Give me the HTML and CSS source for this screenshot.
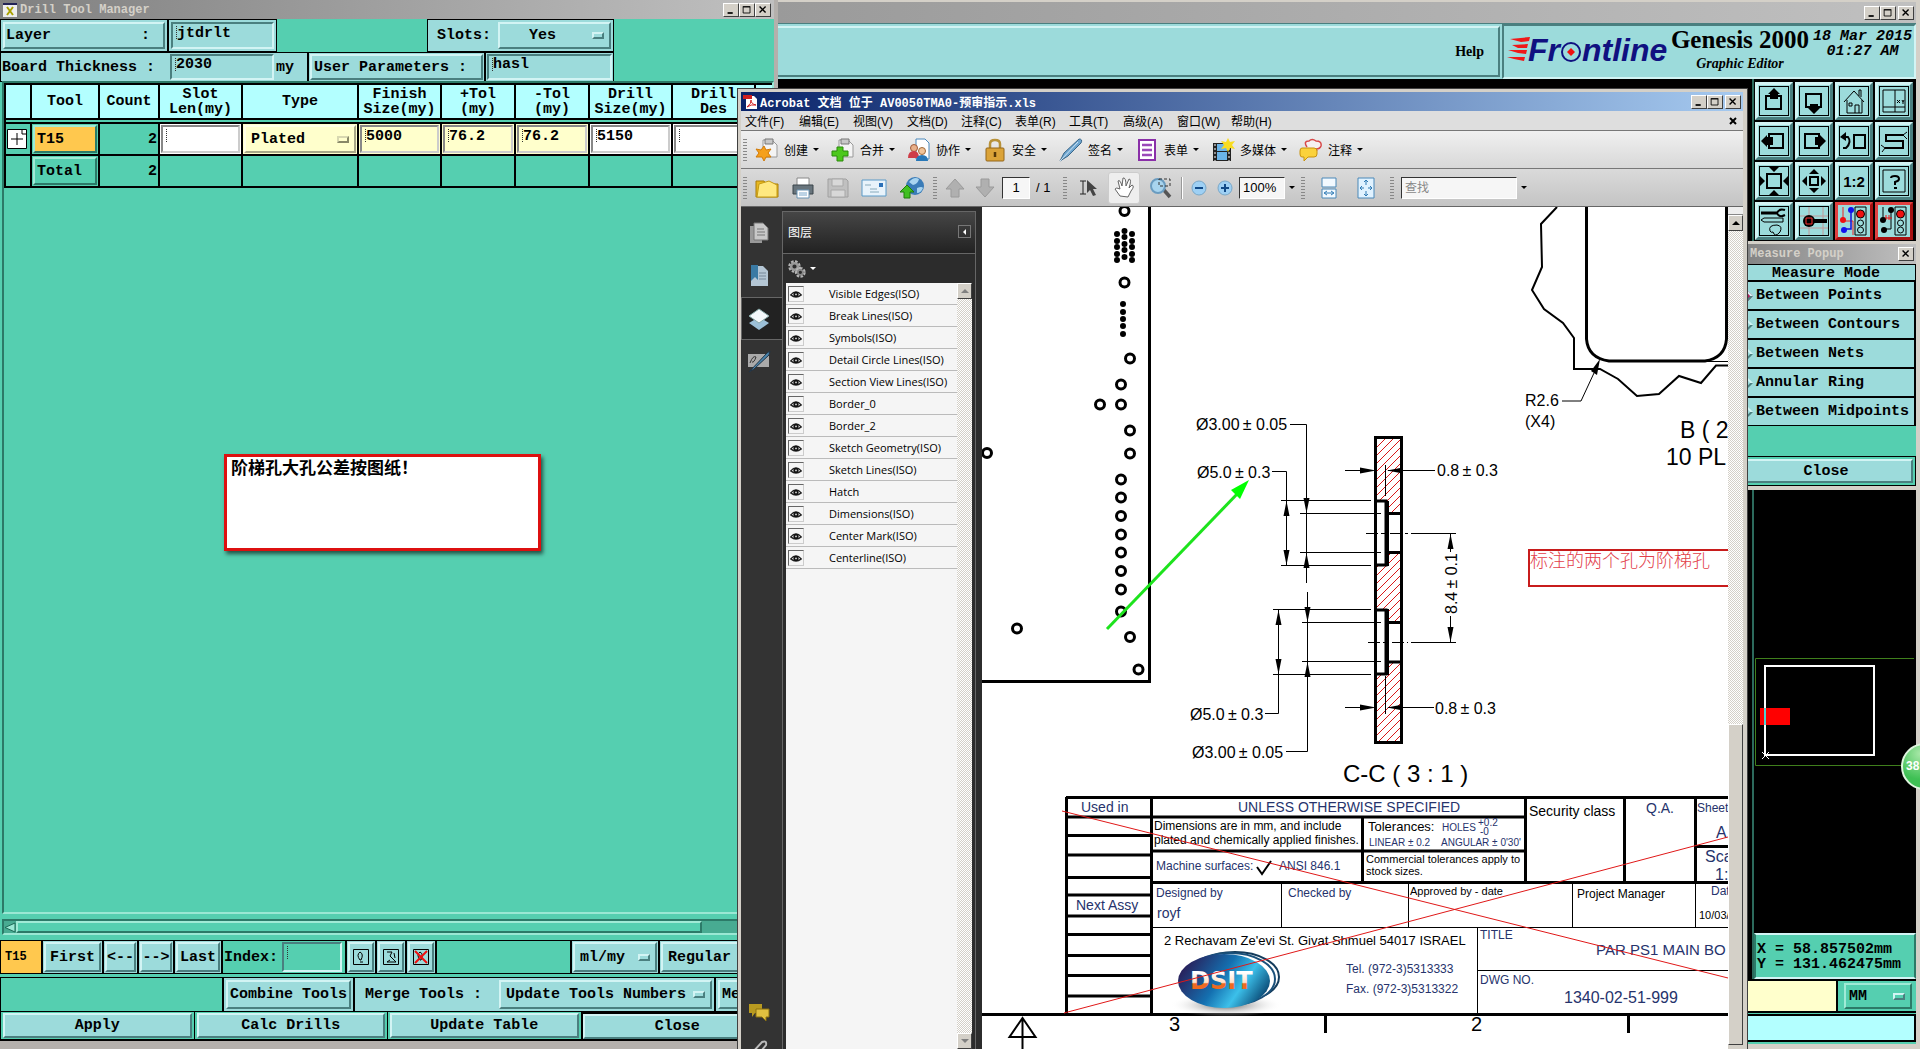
FILE: index.html
```html
<!DOCTYPE html>
<html lang="zh-CN">
<head>
<meta charset="utf-8">
<title>Genesis 2000 - Drill Tool Manager</title>
<link rel="stylesheet" href="styles.css">
</head>
<body>
<svg class="defs" aria-hidden="true">
  <defs>
    <symbol id="min" viewBox="0 0 16 14"><path d="M4 10.5h6" stroke="#000" stroke-width="2"/></symbol>
    <symbol id="max" viewBox="0 0 16 14"><path d="M3.500 3.500h8v7h-8zM3 3h9" fill="none" stroke="#000"/></symbol>
    <symbol id="close" viewBox="0 0 16 14"><path d="M4 3l7 7M11 3l-7 7" stroke="#000" stroke-width="1.600"/></symbol>
    <symbol id="eye" viewBox="0 0 16 16"><path d="M2 9Q8 2 14 9Q8 14 2 9z" fill="#fff" stroke="#222" stroke-width="1.500"/><circle cx="8" cy="8.500" r="3" fill="#111"/><circle cx="8" cy="8.500" r="1" fill="#ddd"/></symbol>
    <symbol id="page" viewBox="0 0 24 24"><path d="M8 2h9l5 5v12H8z" fill="#f4f4f4" stroke="#999"/><path d="M10 1h8v5h-8z" fill="#c8c8c8" stroke="#777"/></symbol>
    <linearGradient id="ball" x1="0" y1="0.300" x2="1" y2="0.700"><stop offset="0" stop-color="#2a1a55"/><stop offset="0.450" stop-color="#1470b0"/><stop offset="0.700" stop-color="#3cc0ea"/><stop offset="1" stop-color="#06406c"/></linearGradient>
    <linearGradient id="brand" x1="0" y1="0" x2="0" y2="1"><stop offset="0.200" stop-color="#fff"/><stop offset="0.550" stop-color="#ffe0c8"/><stop offset="0.600" stop-color="#f06a20"/></linearGradient>
    <radialGradient id="shade"><stop offset="0" stop-color="#555"/><stop offset="1" stop-color="#fff" stop-opacity="0"/></radialGradient>
    <pattern id="hatch" width="8" height="8" patternUnits="userSpaceOnUse"><path d="M-2 10L10 -2M-2 2L2 -2M6 10L10 6" stroke="#d81818" stroke-width="1"/></pattern>
  </defs>
</svg>

<main class="desktop">

  <section class="editor" aria-label="Genesis 2000 Graphic Editor">
    <div class="bar bar-editor"><span class="wbtns"><button aria-label="Minimize"><svg><use href="#min"/></svg></button><button aria-label="Maximize"><svg><use href="#max"/></svg></button><button class="apart" aria-label="Close"><svg><use href="#close"/></svg></button></span></div>
    <header class="editor-head">
      <nav class="editor-menu"><button>Help</button></nav>
      <div class="brand">
        <svg class="logo" viewBox="0 0 162 28" role="img" aria-label="Frontline">
          <path d="M3 3l20-2-1 4-8 1zM5 9l16-1-1 4-9 0zM1 14l19 0-1 4-8-1zM0 21l18 0-1 4-10-2z" fill="#f01818"/>
          <text x="21" y="25">Fr</text><text x="75" y="25">ntline</text>
          <circle cx="64" cy="16" r="9" fill="none" stroke="#101080" stroke-width="2"/><path d="M64 12l4 4-4 4-4-4z" fill="#f01010"/>
        </svg>
        <div class="product"><h1>Genesis 2000</h1><em>Graphic Editor</em></div>
        <time class="clock">18 Mar 2015<br>01:27 AM</time>
      </div>
    </header>
    <div class="editor-body">
      <div class="canvas"></div>
      <aside class="side">
        <div class="tools">
          <button aria-label="Pan up"><svg viewBox="0 0 32 32"><path d="M8 11h15v13H8z" class="k2"/><path d="M10 9l6-6 6 6h-2v5h-8V9z"/></svg></button>
          <button aria-label="Pan down"><svg viewBox="0 0 32 32"><path d="M8 9h15v13H8z" class="k2"/><path d="M10 23l6 6 6-6h-2v-4h-8v4z"/></svg></button>
          <button aria-label="Home"><svg viewBox="0 0 32 32"><path d="M9 15v13h15V15M6 17L16 6l10 11M21 11V5h2v7M17 28v-8h4v8M11 18h3v3h-3z" class="k1"/></svg></button>
          <button aria-label="Coordinates"><svg viewBox="0 0 32 32"><path d="M5 5h22v22H5zM17 5v22M5 22h22" class="k1"/><path d="M19 15l3 3M22 15l-3 3M24 15l1 2 1-2M25 17v2" class="k1"/></svg></button>
          <button aria-label="Pan left"><svg viewBox="0 0 32 32"><path d="M11 9h14v14H11z" class="k2"/><path d="M9 10l-6 6 6 6v-2h6v-8H9z"/></svg></button>
          <button aria-label="Pan right"><svg viewBox="0 0 32 32"><path d="M7 9h14v14H7z" class="k2"/><path d="M22 10l6 6-6 6v-2h-5v-8h5z"/></svg></button>
          <button aria-label="Previous view"><svg viewBox="0 0 32 32"><path d="M16 10h11v13H16z" class="k2"/><path d="M6 12h4q4 5-2 11H5" class="k2"/><path d="M2 12l6-5v9z"/></svg></button>
          <button aria-label="Serpentine"><svg viewBox="0 0 32 32"><path d="M26 10H8v6h17v7H7" class="k2"/><path d="M25 10l4-3M25 10l4 4M7 23l-4-3M7 23l-3 4" class="k1"/></svg></button>
          <button aria-label="Zoom in"><svg viewBox="0 0 32 32"><path d="M9 9h14v14H9z" class="k2"/><path d="M11 2h10l-5 5zM11 30h10l-5-5zM2 11v10l5-5zM30 11v10l-5-5z"/></svg></button>
          <button aria-label="Zoom out"><svg viewBox="0 0 32 32"><path d="M12 12h8v8h-8z" class="k2"/><path d="M11 9h10l-5-5zM11 23h10l-5 5zM9 11v10l-5-5zM23 11v10l5-5z"/></svg></button>
          <button class="ratio">1:2</button>
          <button aria-label="Query"><svg viewBox="0 0 32 32"><path d="M5 5h22v22H5z" class="k1"/><path d="M13 13q0-2 4-2 4 0 4 3 0 2-4 3v3M16 23h3" class="k2"/></svg></button>
          <button aria-label="Setup"><svg viewBox="0 0 32 32"><path d="M3 8h16" stroke="#000" stroke-width="3"/><path d="M27 5q-6-2-8 3 2 5 8 2" class="k2"/><path d="M3 15l3-2h19v4H6zM12 26q-2-6 7-6 6 1 3 7-5 6-7 0-2 1-3-1z" class="k1"/></svg></button>
          <button aria-label="Pad"><svg viewBox="0 0 32 32"><path d="M11 2v28M25 2v28M2 11h28M2 23h28" stroke="#c09a9a"/><circle cx="11" cy="16" r="6"/><path d="M11 16h18" stroke="#000" stroke-width="4"/><path d="M8 13h6v6H8z" fill="none" stroke="#f33"/></svg></button>
          <button class="alert" aria-label="Net check"><svg viewBox="0 0 32 32"><path d="M5 2v14h10v14" fill="none" stroke="#e22"/><path d="M13 4v20H7" fill="none" stroke="#11d" stroke-width="1.500"/><circle cx="13" cy="5" r="3" fill="#11e"/><circle cx="6" cy="25" r="3" fill="#11e"/><circle cx="5" cy="15" r="3" fill="#e11"/><path d="M17 2h11v28H17z" class="k1"/><circle cx="22.500" cy="9" r="4" fill="#e11" stroke="#000"/><circle cx="22.500" cy="18" r="3" class="k1"/><circle cx="22.500" cy="25" r="3" class="k1"/></svg></button>
          <button class="alert" aria-label="Design check"><svg viewBox="0 0 32 32"><path d="M5 2v12M13 4v20H7" class="k1"/><path d="M6 13h8M8 10v5M11 10v5" stroke="#e11"/><circle cx="13" cy="5" r="3"/><circle cx="6" cy="25" r="3"/><circle cx="5" cy="15" r="3"/><path d="M17 2h11v28H17z" class="k1"/><circle cx="22.500" cy="9" r="4" fill="#e11" stroke="#000"/><circle cx="22.500" cy="18" r="3" class="k1"/><circle cx="22.500" cy="25" r="3" class="k1"/></svg></button>
        </div>
        <div class="overview">
          <svg viewBox="0 0 160 275" role="img" aria-label="Board overview">
            <path d="M160 .5H1.500v107H160" fill="none" stroke="#3f7f1c"/>
            <path d="M6 50h30v17H6z" fill="#f00"/>
            <path d="M11 8h109v89H11z" fill="none" stroke="#fff" stroke-width="2"/><path d="M11 50v17" stroke="#4fd0d0" stroke-width="2"/>
            <path d="M8 94l7 7M15 94l-7 7" stroke="#fff"/>
          </svg>
        </div>
        <pre class="coords">X = 58.857502mm
Y = 131.462475mm</pre>
      </aside>
    </div>
    <div class="command">
      <input class="command-line" aria-label="Command">
      <div class="unit"><label class="pick"><select aria-label="Units"><option>MM</option></select><span class="knob"></span></label></div>
    </div>
    <input class="message" aria-label="Message">
  </section>

  <section class="drill" aria-label="Drill Tool Manager">
    <div class="bar bar-drill"><svg class="appicon" viewBox="0 0 14 14"><path d="M0 0h14v14H0z" fill="#eee"/><path d="M0 1h14" stroke="#225" stroke-width="2"/><path d="M4 4l6 8M10 4l-6 8" stroke="#a8a000" stroke-width="2"/></svg><b>Drill Tool Manager</b><span class="wbtns"><button aria-label="Minimize"><svg><use href="#min"/></svg></button><button aria-label="Maximize"><svg><use href="#max"/></svg></button><button aria-label="Close"><svg><use href="#close"/></svg></button></span></div>
    <form class="drill-form">
      <div class="line line-a">
        <div class="cell"><button type="button" class="bev spread"><span>Layer</span><span>:</span></button></div>
        <div class="cell"><input class="sunk" value="jtdrlt" aria-label="Layer"></div>
        <div></div>
        <div class="cell"><label for="slots">Slots:</label><span class="pick"><select id="slots"><option>Yes</option></select><span class="knob"></span></span></div>
      </div>
      <div class="line line-b">
        <div class="cell"><label for="thick">Board Thickness :</label><input id="thick" class="sunk" value="2030"><span>my</span></div>
        <div class="cell"><button type="button" class="bev left">User Parameters :</button></div>
        <div class="cell"><input class="sunk" value="hasl" aria-label="User Parameters"></div>
      </div>
      <div class="frame">
        <table class="grid">
          <colgroup><col class="c0"><col class="c1"><col class="c2"><col class="c3"><col class="c4"><col class="c3"><col class="c5"><col class="c5"><col class="c3"><col class="c3"><col class="c6"></colgroup>
          <thead><tr><th></th><th>Tool</th><th>Count</th><th>Slot<br>Len(my)</th><th>Type</th><th>Finish<br>Size(my)</th><th>+Tol<br>(my)</th><th>-Tol<br>(my)</th><th>Drill<br>Size(my)</th><th>Drill<br>Des</th><th></th></tr></thead>
          <tbody>
            <tr class="gap"><td colspan="11"></td></tr>
            <tr>
              <td><button type="button" class="plus" aria-label="Expand"><svg viewBox="0 0 20 20"><path d="M.5.5h19v19H.5z" fill="#fff" stroke="#000"/><path d="M4 10h12M10 4v12M15 1v4h4" fill="none" stroke="#000"/></svg></button></td>
              <td><button type="button" class="bev left tool">T15</button></td>
              <td class="num">2</td>
              <td class="white"><input class="sunk" aria-label="Slot length"></td>
              <td class="cream"><label class="pick"><select aria-label="Type"><option>Plated</option></select><span class="knob"></span></label></td>
              <td class="cream"><input class="sunk" value="5000" aria-label="Finish size"></td>
              <td class="cream"><input class="sunk" value="76.2" aria-label="Plus tolerance"></td>
              <td class="cream"><input class="sunk" value="76.2" aria-label="Minus tolerance"></td>
              <td class="white"><input class="sunk" value="5150" aria-label="Drill size"></td>
              <td class="white"><input class="sunk" aria-label="Drill designator"></td>
              <td></td>
            </tr>
            <tr><td></td><td><button type="button" class="bev left">Total</button></td><td class="num">2</td><td></td><td></td><td></td><td></td><td></td><td></td><td></td><td></td></tr>
          </tbody>
        </table>
      </div>
      <div class="hscroll"><svg viewBox="0 0 12 11"><path d="M11 1v9L1 5.500z" fill="#9ae8d4" stroke="#1c6a56"/></svg><span></span></div>
      <div class="navrow">
        <output class="cell current">T15</output>
        <div class="cell"><button type="button" class="bev">First</button></div>
        <div class="cell"><button type="button" class="bev">&lt;--</button></div>
        <div class="cell"><button type="button" class="bev">--&gt;</button></div>
        <div class="cell"><button type="button" class="bev">Last</button></div>
        <div class="cell green"><label for="idx">Index:</label><input id="idx" class="sunk"></div>
        <div class="cell"><button type="button" class="bev" aria-label="Highlight"><svg viewBox="0 0 16 16"><path d="M.5.5h15v15H.5zM7 11q-4-5 0-8 4 2 1 8zM7 13h3" class="k1"/></svg></button></div>
        <div class="cell"><button type="button" class="bev" aria-label="Select"><svg viewBox="0 0 16 16"><path d="M.5.5h15v15H.5zM4 3h5l-2 4 6 6H4l3-2M11 4l1 5" class="k1"/></svg></button></div>
        <div class="cell"><button type="button" class="bev" aria-label="Clear"><svg viewBox="0 0 16 16"><path d="M.5.5h15v15H.5zM7 11q-4-5 0-8 4 2 1 8z" class="k1"/><path d="M2 2l12 12M14 2L2 14" stroke="#e11" stroke-width="2"/></svg></button></div>
        <div class="cell void"></div>
        <div class="cell"><label class="pick"><select aria-label="Unit"><option>ml/my</option></select><span class="knob"></span></label></div>
        <div class="cell"><button type="button" class="bev left">Regular</button></div>
      </div>
      <div class="mergerow">
        <div class="cell void"></div>
        <div class="cell"><button type="button" class="bev">Combine Tools</button></div>
        <div class="cell"><label for="merge">Merge Tools :</label><span class="pick"><select id="merge"><option>Update Tools Numbers</option></select><span class="knob"></span></span></div>
        <div class="cell"><button type="button" class="bev left">Me</button></div>
      </div>
      <div class="actions">
        <div><button type="button" class="bev">Apply</button></div><div><button type="button" class="bev">Calc Drills</button></div><div><button type="button" class="bev">Update Table</button></div><div><button type="button" class="bev">Close</button></div>
      </div>
    </form>
    <p class="note">阶梯孔大孔公差按图纸！</p>
  </section>

  <section class="popup" aria-label="Measure Popup">
    <div class="bar bar-popup"><b>Measure Popup</b><span class="wbtns"><button aria-label="Close"><svg><use href="#close"/></svg></button></span></div>
    <h2>Measure Mode</h2>
    <ul>
      <li><button class="on">Between Points</button></li><li><button>Between Contours</button></li><li><button>Between Nets</button></li><li><button>Annular Ring</button></li><li><button>Between Midpoints</button></li>
    </ul>
    <div class="popup-foot"><button class="bev">Close</button></div>
  </section>

  <section class="acrobat" aria-label="Acrobat">
    <div class="bar bar-acrobat"><svg class="appicon" viewBox="0 0 14 14"><path d="M3 1h8l3 3v10H3z" fill="#fff"/><path d="M0 0h9v4H0z" fill="#d02020"/><path d="M4 12q5-4 4-7 0 4 5 5-5-1-9 2z" fill="none" stroke="#d02020"/></svg><b>Acrobat 文档 位于 AV0050TMA0-预审指示.xls</b><span class="wbtns"><button aria-label="最小化"><svg><use href="#min"/></svg></button><button aria-label="最大化"><svg><use href="#max"/></svg></button><button class="apart" aria-label="关闭"><svg><use href="#close"/></svg></button></span></div>
    <nav class="menus"><button>文件(F)</button><button>编辑(E)</button><button>视图(V)</button><button>文档(D)</button><button>注释(C)</button><button>表单(R)</button><button>工具(T)</button><button>高级(A)</button><button>窗口(W)</button><button>帮助(H)</button><button class="doc-close" aria-label="关闭文档"><svg viewBox="0 0 8 8"><path d="M1 1l6 6M7 1L1 7" stroke="#000" stroke-width="2"/></svg></button></nav>
    <div class="tasks">
      <span class="grip"></span>
      <button><svg viewBox="0 0 24 24"><use href="#page"/><path d="M9 8l2 4 5-1-3 4 3 4-5 0-2 4-2-4-6 0 3-4-3-4 5 1z" fill="#f5a01c" stroke="#d07a08"/></svg>创建</button>
      <button><svg viewBox="0 0 24 24"><use href="#page"/><path d="M6 9h6v4h5v5h-5v5H6v-5H1v-5h5z" fill="#4cc81c" stroke="#2a8a0a"/></svg>合并</button>
      <button><svg viewBox="0 0 24 24"><path d="M9 1h9l4 4v16H9z" fill="#fff" stroke="#4a88bb"/><circle cx="7" cy="10" r="3.500" fill="#e8b08a" stroke="#a05a3a"/><path d="M1 20q0-7 6-7 5 0 5 7z" fill="#cf3d48"/><circle cx="15" cy="13" r="3.500" fill="#f0c49a" stroke="#a06a3a"/><path d="M9 23q0-6 6-6 6 0 6 6z" fill="#2878b8"/></svg>协作</button>
      <button><svg viewBox="0 0 24 24"><path d="M7 11V6q0-4 5-4t5 4v5" fill="none" stroke="#b8923a" stroke-width="2.500"/><rect x="3" y="10" width="18" height="13" rx="1" fill="#dba338" stroke="#94661a"/><path d="M12 14v5" stroke="#553808" stroke-width="2.500"/></svg>安全</button>
      <button><svg viewBox="0 0 24 24"><path d="M1 23l4-8L20 1q4 0 2 4L9 18z" fill="#6fa6d0" stroke="#3a6688"/><path d="M1 23l18-19" stroke="#cfe4f4"/></svg>签名</button>
      <button><svg viewBox="0 0 24 24"><path d="M4 2h16v20H4z" fill="#fff" stroke="#8a2fa8" stroke-width="2"/><path d="M7 7h10M7 12h10M7 17h10" stroke="#9a48b8" stroke-width="2.500"/></svg>表单</button>
      <button><svg viewBox="0 0 24 24"><path d="M2 5h18v18H2z" fill="#222"/><path d="M6 6h10v7H6zM6 14h10v8H6z" fill="#6ab4e8"/><path d="M4 6v17M18 10v13" stroke="#fff" stroke-dasharray="2 2"/><path d="M17 0l2 4 5-1-3 4 3 4-5-1-2 4-2-4-5 1 3-4-3-4 5 1z" fill="#f8dc20"/></svg>多媒体</button>
      <button><svg viewBox="0 0 24 24"><path d="M8 9Q4 3 10 3q3-3 7 0 6 0 5 5-1 3-5 3l1 2" fill="#f6f0f0" stroke="#d84848" stroke-width="1.500"/><path d="M3 10h12q3 0 3 3v3q0 3-3 3H9l-4 4v-4H3q-2 0-2-3v-3q0-3 2-3z" fill="#fbd23c" stroke="#c8920c"/></svg>注释</button>
    </div>
    <div class="views">
      <span class="grip"></span>
      <button aria-label="打开"><svg class="i26" viewBox="0 0 26 24"><path d="M2 5h8l2 3h12v13H2z" fill="#e8b820" stroke="#a87c08"/><path d="M5 8l10-3 8 4v12H3z" fill="#ffe880" stroke="#c49a14"/></svg></button>
      <button aria-label="打印"><svg viewBox="0 0 24 24"><path d="M6 2h12v8H6z" fill="#fff" stroke="#888"/><path d="M2 9h20v9H2z" fill="#68747c" stroke="#3a444a"/><path d="M6 14h12v8H6z" fill="#fff" stroke="#6a94b4"/><path d="M8 17h8M8 19h8" stroke="#7aa8cc"/></svg></button>
      <button aria-label="保存"><svg viewBox="0 0 24 24"><path d="M2 3h18l2 2v16H2z" fill="#c0c0c0" stroke="#a0a0a0"/><path d="M6 3h11v7H6zM5 14h14v7H5z" fill="#d8d8d8" stroke="#a8a8a8"/></svg></button>
      <button aria-label="电子邮件"><svg class="i26" viewBox="0 0 26 24"><path d="M1 4h24v16H1z" fill="#e8f3fb" stroke="#5a9ac8"/><path d="M18 7h4v4h-4z" fill="#2a70b8"/><path d="M4 9h6M9 13h7M9 16h9" stroke="#8ab"/></svg></button>
      <button aria-label="上载"><svg viewBox="0 0 24 24"><circle cx="15" cy="10" r="9" fill="#3a7cb8"/><path d="M9 6q5-6 10-3-1 5-6 6zM17 12q5-2 6 0-2 5-6 5z" fill="#a8d4f0"/><path d="M7 9l7 7h-4v6H4v-6H0z" fill="#40c020" stroke="#1f7c0a"/></svg></button>
      <span class="grip"></span>
      <button aria-label="上一页"><svg viewBox="0 0 24 24"><path d="M12 3l9 10h-5v8H8v-8H3z" fill="#b0b0b0" stroke="#9a9a9a"/></svg></button>
      <button aria-label="下一页"><svg viewBox="0 0 24 24"><path d="M12 21l9-10h-5V3H8v8H3z" fill="#b0b0b0" stroke="#9a9a9a"/></svg></button>
      <input class="field page-no" value="1" aria-label="页码"><span class="pages">/ 1</span>
      <span class="grip"></span>
      <button aria-label="选择"><svg viewBox="0 0 24 24"><path d="M4 5h6M7 5v13M4 18h6" stroke="#222" fill="none"/><path d="M11 4v13l3-3 3 6 3-1-3-6h4z" fill="#444"/></svg></button>
      <button class="pressed" aria-label="手形"><svg viewBox="0 0 24 24"><path d="M8 20L3 13q1-2 5 0L6 5q2-2 4 5l1-8q3-1 3 8l3-7q3 0 0 9l3-3q3 1-1 6l-3 6z" fill="#fff" stroke="#666"/></svg></button>
      <button aria-label="缩放"><svg viewBox="0 0 24 24"><path d="M14 13l7 8" stroke="#555" stroke-width="3.500"/><circle cx="9" cy="10" r="7" fill="#a8d4ee" stroke="#6a9cc0" stroke-width="2"/><path d="M10 3h11v7H10z" fill="none" stroke="#333" stroke-dasharray="3 2"/></svg></button>
      <span class="rule"></span>
      <button aria-label="缩小"><svg class="i16" viewBox="0 0 16 16"><circle cx="8" cy="8" r="7" fill="#9ed0f4" stroke="#7aa8c8"/><path d="M4 8h8" stroke="#114a88" stroke-width="2"/></svg></button>
      <button aria-label="放大"><svg class="i16" viewBox="0 0 16 16"><circle cx="8" cy="8" r="7" fill="#9ed0f4" stroke="#7aa8c8"/><path d="M4 8h8M8 4v8" stroke="#114a88" stroke-width="2"/></svg></button>
      <input class="field zoom" value="100%" aria-label="缩放比例"><span class="caret"></span>
      <span class="grip"></span>
      <button aria-label="适合宽度"><svg viewBox="0 0 24 24"><path d="M5 2h14v9H5zM5 13h14v9H5z" fill="#f2f9ff" stroke="#4a88b8"/><path d="M8 17h8M10 15l-3 2 3 2M14 15l3 2-3 2" fill="none" stroke="#2f7ab4"/></svg></button>
      <button aria-label="适合页面"><svg viewBox="0 0 24 24"><path d="M4 2h16v20H4z" fill="#e0f2ff" stroke="#4a88b8"/><path d="M12 4v5M12 15v5M6 12h4M14 12h4M10 6l2-2 2 2M10 18l2 2 2-2M8 10l-2 2 2 2M16 10l2 2-2 2" fill="none" stroke="#2f7ab4"/></svg></button>
      <span class="grip"></span>
      <input class="field find" placeholder="查找" aria-label="查找"><span class="caret"></span>
    </div>
    <div class="reader">
      <nav class="rail">
        <button aria-label="页面"><svg viewBox="0 0 24 24"><path d="M3 5h12v17H3z" fill="#999"/><path d="M7 2h9l5 5v12H7z" fill="#c8c8c8" stroke="#777"/><path d="M10 8h7M10 11h8M10 14h8" stroke="#777"/></svg></button>
        <button aria-label="书签"><svg viewBox="0 0 24 24"><path d="M4 2h12l5 5v15H4z" fill="#b4c6d4"/><path d="M4 1h7v15l-3-3-4 4z" fill="#3a7aa4"/><path d="M12 9h7M12 12h7M12 15h7" stroke="#789"/></svg></button>
        <button class="active" aria-label="图层"><svg viewBox="0 0 24 24"><path d="M12 10l10 6-10 7-10-7z" fill="#9cc0d8"/><path d="M12 2l10 7-10 7L2 9z" fill="#f4f8fb" stroke="#8aa"/></svg></button>
        <button aria-label="签名"><svg viewBox="0 0 24 24"><path d="M1 4h21v13H1z" fill="#aaa"/><path d="M3 13q3-8 6-6-2 6-4 5" fill="none" stroke="#333"/><path d="M2 22L20 3l3-2-1 4L7 19z" fill="#4a86ae" stroke="#234"/></svg></button>
        <span class="push"></span>
        <button aria-label="注释"><svg viewBox="0 0 24 24"><path d="M2 4h13v9H8l-3 4v-4H2z" fill="#b89a20"/><path d="M9 9h13v8h-3v4l-4-4H9z" fill="#e0c040" stroke="#8a7010"/></svg></button>
        <button class="clip" aria-label="附件"><svg viewBox="0 0 24 24"><path d="M5 20L15 9q5-2 4 3l-8 10" fill="none" stroke="#bbb" stroke-width="2"/></svg></button>
      </nav>
      <aside class="layers">
        <div class="layers-head"><h2>图层</h2><button aria-label="折叠"></button></div>
        <div class="layers-tools"><button aria-label="选项"><svg viewBox="0 0 24 24"><circle cx="9" cy="9" r="6" fill="none" stroke="#b4b4b4" stroke-width="3" stroke-dasharray="3 1.700"/><circle cx="9" cy="9" r="4" fill="none" stroke="#999" stroke-width="3"/><circle cx="16" cy="16" r="5" fill="none" stroke="#b4b4b4" stroke-width="3" stroke-dasharray="3 1.500"/><circle cx="16" cy="16" r="3" fill="none" stroke="#888" stroke-width="2"/></svg></button><span class="caret light"></span></div>
        <div class="layers-list">
          <ul>
            <li><button aria-label="显示"><svg><use href="#eye"/></svg></button>Visible Edges(ISO)</li>
            <li><button aria-label="显示"><svg><use href="#eye"/></svg></button>Break Lines(ISO)</li>
            <li><button aria-label="显示"><svg><use href="#eye"/></svg></button>Symbols(ISO)</li>
            <li><button aria-label="显示"><svg><use href="#eye"/></svg></button>Detail Circle Lines(ISO)</li>
            <li><button aria-label="显示"><svg><use href="#eye"/></svg></button>Section View Lines(ISO)</li>
            <li><button aria-label="显示"><svg><use href="#eye"/></svg></button>Border_0</li>
            <li><button aria-label="显示"><svg><use href="#eye"/></svg></button>Border_2</li>
            <li><button aria-label="显示"><svg><use href="#eye"/></svg></button>Sketch Geometry(ISO)</li>
            <li><button aria-label="显示"><svg><use href="#eye"/></svg></button>Sketch Lines(ISO)</li>
            <li><button aria-label="显示"><svg><use href="#eye"/></svg></button>Hatch</li>
            <li><button aria-label="显示"><svg><use href="#eye"/></svg></button>Dimensions(ISO)</li>
            <li><button aria-label="显示"><svg><use href="#eye"/></svg></button>Center Mark(ISO)</li>
            <li><button aria-label="显示"><svg><use href="#eye"/></svg></button>Centerline(ISO)</li>
          </ul>
          <div class="vscroll"><button class="up dim" aria-label="向上"></button><span class="push"></span><button class="down dim" aria-label="向下"></button></div>
        </div>
      </aside>
      <div class="sheet">
        <svg class="drawing" viewBox="982 207 746 842" role="img" aria-label="PCB drawing">
          <!-- board outline and holes -->
          <path d="M1149.500 207V681.500H982" fill="none" stroke="#000" stroke-width="3"/>
          <g class="hole"><circle cx="1124.500" cy="211" r="4.500"/><circle cx="1124.500" cy="282.500" r="4.500"/><circle cx="1130" cy="358.500" r="4.500"/><circle cx="1121" cy="384.500" r="4.500"/><circle cx="1100" cy="404.500" r="4.500"/><circle cx="1121" cy="404.500" r="4.500"/><circle cx="1130" cy="430.500" r="4.500"/><circle cx="987" cy="453" r="4.500"/><circle cx="1130" cy="453.500" r="4.500"/><circle cx="1121" cy="479.500" r="4.500"/><circle cx="1121" cy="497.500" r="4.500"/><circle cx="1121" cy="516" r="4.500"/><circle cx="1121" cy="534.500" r="4.500"/><circle cx="1121" cy="552.500" r="4.500"/><circle cx="1121" cy="571" r="4.500"/><circle cx="1121" cy="589.500" r="4.500"/><circle cx="1121" cy="611.500" r="4.500"/><circle cx="1017" cy="628.500" r="4.500"/><circle cx="1130" cy="637" r="4.500"/><circle cx="1138.500" cy="669.500" r="4.500"/></g>
          <path class="dots" d="M1117 234v0M1117 241v0M1117 247v0M1117 254v0M1117 260v0M1124.500 231v0M1124.500 237v0M1124.500 244v0M1124.500 250v0M1124.500 257v0M1132 234v0M1132 241v0M1132 247v0M1132 254v0M1132 260v0M1123 304v0M1123 312v0M1123 319v0M1123 326v0M1123 334v0"/>
          <path d="M1107 629L1240 491" stroke="#1de31d" stroke-width="3"/><path d="M1249 480l-18 10 9 9z" fill="#0f0"/>
          <!-- section C-C -->
          <path d="M1375.500 437.500h26v305h-26z" fill="url(#hatch)"/>
          <path d="M1376 501h11v13h15v38h-15v14h-11zM1376 610h11v13h15v38h-15v14h-11z" fill="#fff"/>
          <path d="M1375.500 437.500h26v305h-26zM1375 501h11v64h-11M1375 610h11v64h-11M1387.500 501v65M1387.500 609v66M1387 513.500h15M1387 552.500h15M1387 622.500h15M1387 662h15" fill="none" stroke="#000" stroke-width="3"/>
          <g fill="none" stroke="#000">
            <path d="M1290 424.500h16.500V583M1272 471.500h14.500V565M1281 500.500h90M1300 513.500h81M1300 552.500h81M1281 565.500h90"/>
            <path d="M1265 713.500h13.500V610M1286 751.500h21.500V592M1273 609.500h98M1302 622.500h79M1302 661.500h79M1273 674.500h98"/>
            <path d="M1345 470.500h28M1388 470.500h47M1345 707.500h28M1388 707.500h46M1385.500 465v31M1385.500 676v38"/>
            <path d="M1366 533.500h42M1368 642.500h40" stroke-dasharray="12 3 6 3"/><path d="M1411 533.500h45M1411 642.500h45M1450.500 534v18M1450.500 616v26"/>
          </g>
          <path d="M1306.500 513l-3-15h6zM1306.500 553l-3 15h6zM1286.500 501l-3 15h6zM1286.500 565l-3-15h6zM1278.500 610l-3 15h6zM1278.500 674l-3-15h6zM1307.500 622l-3-15h6zM1307.500 662l-3 15h6zM1376 470.500l-16-3v6zM1387 470.500l16-3v6zM1376 707.500l-16-3v6zM1387 707.500l16-3v6zM1450.500 534l-3 15h6zM1450.500 642l-3-15h6z"/>
          <g font-size="16"><text x="1196" y="430">Ø3.00&#8201;± 0.05</text><text x="1197" y="478">Ø5.0&#8201;± 0.3</text><text x="1190" y="720">Ø5.0&#8201;± 0.3</text><text x="1192" y="758">Ø3.00&#8201;± 0.05</text><text x="1437" y="476">0.8&#8201;± 0.3</text><text x="1435" y="714">0.8&#8201;± 0.3</text><text x="1525" y="406">R2.6</text><text x="1525" y="427">(X4)</text><text transform="translate(1457 614) rotate(-90)">8.4&#8201;± 0.1</text></g>
          <g font-size="24"><text x="1343" y="782">C-C ( 3 : 1 )</text></g>
          <g font-size="23"><text x="1680" y="438">B ( 2</text><text x="1666" y="465">10 PL</text></g>
          <!-- detail B -->
          <path d="M1557 207L1541 224L1542 267L1532 290L1544 309L1563 323L1574 338V369H1600L1618 379L1637 396L1659 394L1679 376L1701 383L1716 365.500H1728" fill="none" stroke="#000" stroke-width="2"/>
          <path d="M1586.500 207V339Q1588 358 1609 361H1705Q1725 358 1726.500 339V207" fill="none" stroke="#000" stroke-width="3"/><path d="M1705 361.500h23M1562 401h19l13-28" fill="none" stroke="#000"/><path d="M1600 359l-9 12 6 4z"/>
          <path d="M1740 550H1529v36h211" fill="none" stroke="#c81c1c" stroke-width="2"/><text class="remark" x="1530" y="567" font-size="18">标注的两个孔为阶梯孔</text>
          <!-- title block -->
          <path d="M982 1014.500H1728M1066 797.500H1728M1066.500 797V1014M1151.500 797V1014M1066 817H1526M1066 835.500h86M1066 855h86M1066 877.500h86M1066 895h86M1066 916h86M1066 934.500h86M1066 955.500h86M1066 975.500h86M1066 996h86M1525.500 797v86M1362.500 817v66M1151 851h375M1151 882.500h577M1624.500 797v86M1695.500 797v86M1695 846.500h33M1325.500 1015v18M1628.500 1015v18" fill="none" stroke="#000" stroke-width="3"/>
          <path d="M1281.500 883v45M1408.500 883v45M1572.500 883v45M1695.500 883v45M1152 927.500h576M1477.500 927v88M1477 970.500h251" fill="none" stroke="#000"/>
          <path d="M1022.500 1018l-13 19h26zM1022.500 1018v31" fill="none" stroke="#000" stroke-width="2"/>
          <g class="ink" font-size="14"><text x="1081" y="812">Used in</text><text x="1076" y="910">Next Assy</text><text x="1238" y="812">UNLESS OTHERWISE SPECIFIED</text><text x="1157" y="918">royf</text><text x="1646" y="813">Q.A.</text></g>
          <g class="ink" font-size="12"><text x="1156" y="870">Machine surfaces:</text><text x="1279" y="870">ANSI 846.1</text><text x="1156" y="897">Designed by</text><text x="1288" y="897">Checked by</text><text x="1346" y="973">Tel. (972-3)5313333</text><text x="1346" y="993">Fax. (972-3)5313322</text><text x="1480" y="939">TITLE</text><text x="1480" y="984">DWG NO.</text><text x="1697" y="812">Sheet</text><text x="1711" y="895">Dat</text></g>
          <g class="ink" font-size="10"><text x="1442" y="831">HOLES</text><text x="1478" y="826">+0.2</text><text x="1480" y="835">-0</text><text x="1369" y="846">LINEAR ±  0.2</text><text x="1441" y="846">ANGULAR ±  0'30'</text></g>
          <g class="ink" font-size="16"><text x="1716" y="838">A</text><text x="1705" y="862">Sca</text><text x="1715" y="880">1:</text><text x="1564" y="1003">1340-02-51-999</text></g>
          <text class="ink" x="1596" y="955" font-size="15">PAR PS1 MAIN BO</text>
          <g font-size="12"><text x="1154" y="830">Dimensions are in mm, and include</text><text x="1154" y="844">plated and chemically applied finishes.</text></g>
          <g font-size="13"><text x="1368" y="831">Tolerances:</text><text x="1164" y="945">2 Rechavam Ze'evi St. Givat Shmuel 54017 ISRAEL</text></g>
          <text x="1529" y="816" font-size="14">Security class</text><text x="1577" y="898" font-size="12">Project Manager</text>
          <g font-size="11"><text x="1366" y="863">Commercial tolerances apply to</text><text x="1366" y="875">stock sizes.</text><text x="1410" y="895">Approved by - date</text><text x="1699" y="919">10/03/</text></g>
          <g font-size="20"><text x="1169" y="1031">3</text><text x="1471" y="1031">2</text></g>
          <path d="M1257 867l5 7 9-13" fill="none" stroke="#000" stroke-width="2"/>
          <ellipse cx="1226" cy="1005" rx="56" ry="12" fill="url(#shade)"/>
          <ellipse cx="1235" cy="977" rx="44" ry="25" fill="#fff" stroke="#143c5c" stroke-width="2"/><ellipse cx="1230" cy="979" rx="45" ry="26" fill="#fff" stroke="#1a507a" stroke-width="2"/><ellipse cx="1224" cy="981" rx="46" ry="27" fill="url(#ball)"/>
          <text x="1190" y="989" font-size="24" font-weight="bold" class="dsit">DSIT</text>
          <path d="M1062 811L1728 978M1064 1013L1728 837" stroke="#e01818"/>
        </svg>
        <div class="vscroll"><span class="split"></span><button class="up" aria-label="向上"></button><span class="track"></span><span class="thumb"></span><span class="end"></span></div>
      </div>
    </div>
  </section>

  <span class="badge">38</span>
</main>
</body>
</html>
```
FILE: styles.css
```css
*, *::before, *::after { box-sizing: border-box; }
:root {
  --green: #55cfb0; --teal: #9cdbdb; --dark: #4a7f7f; --lite: #d2f4f4; --grey: #d4d0c8;
  --mono: "Liberation Mono", "Noto Sans CJK SC", monospace;
  --sans: "Liberation Sans", "Noto Sans CJK SC", sans-serif;
}
body { margin: 0; font-family: var(--mono); font-size: 15px; font-weight: bold; color: #000; overflow: hidden; }
button, input, select { font: inherit; color: inherit; border: 0; border-radius: 0; padding: 0; margin: 0; background: none; min-width: 0; }
svg { display: block; flex: none; }
ul { list-style: none; margin: 0; padding: 0; }
h1, h2, p, pre { margin: 0; font: inherit; }
.defs { position: absolute; width: 0; height: 0; }
.desktop { position: relative; height: 100vh; overflow: hidden; background: #000; }
.k1 { fill: none; stroke: #000; stroke-width: 1; }
.k2 { fill: none; stroke: #000; stroke-width: 2; }
.push { flex: 1; }

/* title bars */
.bar { display: flex; align-items: center; gap: 3px; flex: none; font-size: 12px; white-space: nowrap; }
.appicon { width: 14px; height: 14px; }
.wbtns { display: flex; margin-left: auto; }
.wbtns button { width: 16px; height: 14px; background: var(--grey); border: 1px solid; border-color: #fff #404040 #404040 #fff; }
.wbtns button svg { width: 14px; height: 12px; }
.wbtns .apart { margin-left: 2px; }

/* shared motif controls */
.bev { border: 2px solid; border-color: var(--lite) var(--dark) var(--dark) var(--lite); background: var(--teal); white-space: nowrap; overflow: hidden; display: flex; align-items: center; justify-content: center; }
.left { justify-content: flex-start; padding-left: 2px; }
.spread { justify-content: space-between; padding: 0 13px 0 1px; }
.sunk { border: 2px solid; border-color: var(--dark) var(--lite) var(--lite) var(--dark); padding: 0 0 5px 4px; background: repeating-linear-gradient(#333 0 1px, transparent 1px 2px) 3px 2px / 1px 14px no-repeat; }
.pick { display: flex; align-items: center; border: 2px solid; border-color: var(--lite) var(--dark) var(--dark) var(--lite); padding: 0 5px; }
.pick select { appearance: none; flex: 1; }
.knob { width: 12px; height: 7px; border: 2px solid; border-color: var(--lite) var(--dark) var(--dark) var(--lite); }

/* graphic editor */
.editor { position: absolute; inset: 0; display: flex; flex-direction: column; border: solid #d4d0c8; border-width: 2px 4px 5px 0; background: var(--green); }
.bar-editor { height: 21px; padding-right: 2px; background: linear-gradient(90deg, #808080, #c0c0c0); }
.editor-head { display: flex; height: 56px; flex: none; border-top: 1px solid var(--dark); background: var(--teal); }
.editor-menu { flex: 1; display: flex; justify-content: flex-end; margin: 2px; border: 2px solid; border-color: var(--lite) var(--dark) var(--dark) var(--lite); padding-right: 14px; font-family: "Liberation Serif", serif; font-size: 14px; }
.brand { width: 414px; display: flex; border: 2px solid; border-color: var(--dark) var(--lite) var(--lite) var(--dark); padding-left: 3px; }
.logo { width: 162px; height: 28px; margin-top: 10px; font: italic bold 32px var(--sans); fill: #101080; overflow: visible; }
.product { width: 142px; text-align: center; font-family: "Liberation Serif", serif; }
.product h1 { font-size: 25px; line-height: 28px; white-space: nowrap; }
.product em { font-size: 14px; line-height: 20px; }
.clock { flex: 1; font-style: italic; line-height: 15px; padding-top: 3px; text-align: center; white-space: nowrap; }
.editor-body { flex: 1; display: flex; min-height: 0; }
.canvas { flex: 1; background: #000; }
.side { width: 164px; display: flex; flex-direction: column; border-left: 2px solid #2c6a5c; }
.tools { display: grid; grid-template-columns: repeat(4, 38px); grid-auto-rows: 38px; gap: 2px; padding: 3px 0 2px 1px; background: #000; }
.tools button { background: var(--teal); border: 3px solid; border-color: var(--lite) var(--dark) var(--dark) var(--lite); outline: 1px solid #000; outline-offset: -5px; }
.tools svg { width: 32px; height: 32px; }
.tools .alert { border-color: #e04040 #a81010 #a81010 #e04040; outline: 0; }
.tools .ratio { font-family: var(--sans); font-size: 15px; }
.overview { flex: 1; background: #000; display: flex; align-items: flex-end; min-height: 0; }
.overview svg { width: 160px; height: 275px; }
.coords { height: 46px; border: 2px solid; border-color: var(--lite) #2c7a68 var(--lite) #2c7a68; padding: 7px 0 0 1px; font-size: 15px; line-height: 15px; }
.command { display: flex; height: 34px; flex: none; border: 2px solid #000; border-right: 0; background: #000; gap: 2px; }
.command-line { flex: 1; background: #ffffcc; }
.unit { width: 78px; display: flex; background: var(--green); padding: 2px 4px 2px 6px; }
.unit .pick { flex: 1; border-color: #a0ead6 #2c7a68 #2c7a68 #a0ead6; padding-left: 3px; }
.message { flex: none; height: 28px; margin: 1px 0 2px; border: 2px solid #000; background: #b3ffff; }

/* drill tool manager */
.drill { position: absolute; left: 0; top: 0; bottom: 0; width: 778px; display: flex; flex-direction: column; background: var(--green); border: solid #b4b0ac; border-width: 0 4px 8px 0; }
.bar-drill { height: 19px; padding: 0 3px; background: linear-gradient(90deg, #808080, #c0c0c0); color: #d4d0c8; }
.drill-form { flex: 1; display: flex; flex-direction: column; min-height: 0; }
.cell { border: 1px solid #000; display: flex; align-items: stretch; background: var(--teal); padding: 2px; white-space: nowrap; min-width: 0; }
.cell > label:first-child, .cell > span:last-child { align-self: center; }
.cell > .pick:last-child { align-self: stretch; }
.cell > .bev, .cell > .sunk { flex: 1; }
.line { display: grid; flex: none; }
.line-a { grid-template-columns: 168px 109px 150px 187px; height: 33px; }
.line-a label { width: 68px; padding-left: 7px; }
.line-a .pick { flex: 1; padding-left: 29px; }
.line-b { grid-template-columns: 308px 177px 129px; height: 29px; }
.line-b .cell { padding: 1px; }
.line-b label { width: 168px; }
.line-b span { width: 32px; padding-left: 2px; }
.frame { flex: 1; min-height: 0; overflow: hidden; margin: 0 0 0 2px; border: 2px solid; border-color: #2c7a68 #9ae8d4 #9ae8d4 #2c7a68; }
.grid { border-collapse: collapse; table-layout: fixed; width: 770px; line-height: 15px; }
.grid th { height: 35px; background: #b3ffff; border: 2px solid #000; padding: 0; }
.grid td { height: 32px; border: 2px solid #000; padding: 1px; }
.grid .gap td { height: 4px; padding: 0; }
.grid button, .grid .sunk { display: flex; width: 100%; height: 28px; }
.grid .bev { background: var(--green); border-color: #a0ead6 #2c7a68 #2c7a68 #a0ead6; }
.grid .tool { background: #ffc84e; }
.grid .plus { width: 20px; height: 20px; }
.grid .num { text-align: right; }
.grid .pick { height: 28px; border-color: #ffffe8 #a8a888 #a8a888 #ffffe8; }
.grid .pick .knob { border-color: #d8d8b0 #888868 #888868 #d8d8b0; }
.grid .white { background: #fff; }
.grid .cream { background: #ffffcc; }
.grid .white .sunk, .grid .cream .sunk { border-color: #888 #ccc #ccc #888; }
.c0 { width: 26px; } .c1 { width: 68px; } .c2 { width: 60px; } .c3 { width: 83px; } .c4 { width: 116px; } .c5 { width: 74px; } .c6 { width: 20px; }
.hscroll { flex: none; display: flex; align-items: center; height: 16px; margin: 5px 0 5px 2px; border: 2px solid; border-color: #2c7a68 #9ae8d4 #9ae8d4 #2c7a68; background: #48ab92; }
.hscroll svg { width: 12px; height: 11px; }
.hscroll span { width: 686px; height: 12px; background: var(--green); border: 2px solid; border-color: #a0ead6 #2c7a68 #2c7a68 #a0ead6; }
.navrow { display: grid; flex: none; height: 34px; grid-template-columns: 42px 61px 35px 36px 48px 124px 30px 30px 30px 135px 88px 115px; }
.navrow .cell { padding: 1px; }
.navrow .green, .void { background: var(--green); }
.navrow .bev svg { width: 16px; height: 16px; }
.navrow .sunk { flex: none; width: 60px; }
.navrow label:first-child:not(.pick) { width: 58px; }
.navrow .pick { flex: 1; align-self: stretch; }
.navrow .left { padding-left: 5px; }
.navrow .current { background: #ffc84e; align-items: center; padding-left: 4px; font-size: 12px; }
.mergerow { display: grid; flex: none; height: 35px; margin-top: 3px; grid-template-columns: 223px 131px 361px 59px; }
.mergerow label { width: 142px; padding-left: 8px; }
.mergerow .pick { flex: 1; }
.actions { display: grid; flex: none; height: 29px; grid-template-columns: repeat(4, 1fr); border-bottom: 2px solid #000; }
.actions div { display: flex; padding: 1px 2px; border-left: 1px solid #000; }
.actions div:last-child { border: 2px solid #000; border-bottom: 0; padding: 0; }
.actions .bev { flex: 1; }
.note { position: absolute; left: 224px; top: 454px; width: 317px; height: 97px; border: 3px solid #dd1010; background: #fff; box-shadow: 2px 3px 4px #0009; padding: 0 4px; line-height: 20px; font-family: "Noto Sans CJK SC", sans-serif; font-size: 17px; }

/* measure popup */
.popup { position: absolute; top: 241px; right: 4px; width: 182px; height: 249px; display: flex; flex-direction: column; background: var(--green); border: solid #d4d0c8; border-width: 3px 0 4px 2px; }
.bar-popup { height: 20px; padding: 0 2px 0 14px; background: linear-gradient(90deg, #808080, #c0c0c0); color: #d4d0c8; }
.popup h2 { height: 17px; line-height: 17px; border: 1px solid #000; background: var(--teal); text-align: center; }
.popup li { height: 29px; border: 1px solid #000; border-width: 1px 2px 1px 0; background: var(--teal); }
.popup li button { display: flex; align-items: center; height: 27px; white-space: nowrap; }
.popup li button::before { content: ""; width: 10px; height: 10px; margin: 0 5px 0 5px; transform: rotate(45deg); border: 2px solid; border-color: var(--lite) var(--dark) var(--dark) var(--lite); }
.popup li .on::before { background: #b02060; }
.popup-foot { margin-top: auto; height: 30px; border: 1px solid #000; padding: 2px; display: flex; }
.popup-foot .bev { flex: 1; }

/* acrobat */
.acrobat { position: absolute; left: 738px; top: 89px; right: 173px; bottom: 0; display: flex; flex-direction: column; background: #dedede; border: solid #d4d0c8; border-width: 3px 4px 0 3px; box-shadow: 0 0 0 1px #404040; font-family: var(--sans); font-weight: normal; font-size: 12px; }
.bar-acrobat { height: 19px; padding: 0 2px; background: linear-gradient(90deg, #0a246a, #a6caf0); color: #fff; font-family: var(--mono); }
.menus { display: flex; height: 20px; flex: none; padding-left: 4px; border-bottom: 1px solid #777; font-size: 12px; }
.menus button { width: 54px; text-align: left; white-space: nowrap; }
.menus .doc-close { width: 8px; margin: 0 6px 0 auto; }
.menus .doc-close svg { width: 8px; height: 8px; }
.grip { width: 4px; height: 22px; background: repeating-linear-gradient(#888 0 1px, transparent 1px 3px); }
.tasks { display: flex; align-items: center; height: 38px; flex: none; padding-left: 2px; gap: 12px; background: linear-gradient(#f0f0f0, #d8d8d8); border-bottom: 1px solid #777; white-space: nowrap; }
.tasks .grip { margin-right: -4px; }
.tasks button { display: flex; align-items: center; gap: 5px; }
.tasks button::after, .caret { content: ""; width: 6px; border: 3px solid transparent; border-top-color: #000; border-bottom: 0; }
.tasks svg, .views svg { width: 24px; height: 24px; }
.views .i26 { width: 26px; }
.views .i16 { width: 16px; height: 16px; }
.views { display: grid; align-items: center; justify-items: center; height: 38px; flex: none; padding-left: 1px; background: linear-gradient(#dadada, #c4c4c4); border-bottom: 1px solid #666; grid-template-columns: 6px 37px 35px 35px 38px 37px 10px 30px 30px 32px 28px 10px 36px 36px 38px 4px 30px 22px 52px 8px 14px 38px 36px 15px 120px 9px; }
.views .pressed { background: #eee; border: 1px solid #ccc; border-radius: 3px; padding: 3px; }
.field { width: 46px; height: 22px; border: 1px solid; border-color: #333 #fff #fff #333; background: #f6f6f6; padding-left: 3px; font-size: 13px; }
.page-no { width: 28px; text-align: center; padding: 0; }
.find { width: 116px; font-size: 12px; }
.find::placeholder { color: #888; opacity: 1; }
.pages { justify-self: start; padding-left: 4px; font-size: 13px; }
.rule { width: 2px; height: 22px; background: linear-gradient(90deg, #999 50%, #fff 50%); }
.reader { flex: 1; display: flex; min-height: 0; background: #2c2c2c; }
.rail { width: 41px; display: flex; flex-direction: column; background: #333; padding-top: 4px; }
.rail button { height: 43px; display: flex; align-items: center; justify-content: center; padding-right: 6px; }
.rail .active { background: #222; border: 1px solid #666; border-right: 0; }
.rail svg { width: 24px; height: 24px; }
.rail .clip { height: 16px; align-items: flex-start; overflow: hidden; }
.layers { width: 194px; margin: 4px 6px 0 0; display: flex; flex-direction: column; border: 1px solid #666; border-bottom: 0; }
.layers-head { display: flex; align-items: center; justify-content: space-between; height: 42px; flex: none; padding: 0 4px 2px 5px; background: linear-gradient(#464646, #222); border-bottom: 1px solid #666; color: #fff; font-size: 12px; }
.layers-head button { width: 13px; height: 13px; border: 1px solid #777; display: flex; align-items: center; justify-content: center; }
.layers-head button::before { content: ""; border: 3px solid transparent; border-right-color: #fff; border-left: 0; }
.layers-tools { display: flex; align-items: center; height: 29px; flex: none; padding-left: 4px; gap: 3px; }
.layers-tools svg { width: 20px; height: 20px; }
.caret.light { border-top-color: #fff; }
.layers-list { flex: 1; display: flex; margin: 0 3px; background: #f5f5f5; min-height: 0; }
.layers-list ul { flex: 1; font-family: "Open Sans", "Noto Sans", sans-serif; font-size: 11px; }
.layers-list li { display: flex; align-items: center; height: 22px; gap: 25px; padding-left: 2px; border-bottom: 1px solid #bbb; white-space: nowrap; }
.layers-list li button { width: 16px; height: 16px; border: 1px solid; border-color: #666 #ccc #ccc #666; }
.layers-list li svg { width: 14px; height: 14px; }
.vscroll { width: 15px; flex: none; display: flex; flex-direction: column; background: repeating-conic-gradient(#d4d0c8 0 25%, #fff 0 50%) 0 0 / 2px 2px; }
.vscroll button { height: 16px; flex: none; background: var(--grey); border: 1px solid; border-color: #fff #404040 #404040 #fff; display: flex; align-items: center; justify-content: center; }
.vscroll .up::before { content: ""; border: 4px solid transparent; border-bottom-color: #000; border-top: 0; }
.vscroll .down::before { content: ""; border: 4px solid transparent; border-top-color: #000; border-bottom: 0; }
.vscroll .dim::before { filter: invert(50%); }
.split { height: 8px; background: #eee; border-bottom: 1px solid #888; }
.track { flex: 494; }
.thumb { flex: 320; background: var(--grey); border: 1px solid; border-color: #fff #404040 #404040 #fff; }
.end { height: 4px; background: var(--grey); }
.sheet { flex: 1; display: flex; min-width: 0; background: #fff; }
.sheet .vscroll { margin-left: auto; }
.drawing { width: 746px; height: 842px; font-family: var(--sans); flex: 0 1 746px; }
.hole { fill: none; stroke: #000; stroke-width: 3; }
.dots { stroke: #000; stroke-width: 6; stroke-linecap: round; }
.ink { fill: #26336c; }
.remark { fill: #e2404a; font-family: "Noto Sans CJK SC", sans-serif; font-weight: 300; }
.dsit { fill: url(#brand); font-family: "DejaVu Sans", sans-serif; }

.badge { position: absolute; top: 743px; right: -28px; width: 47px; height: 47px; border: 2px solid #dff5df; border-radius: 50%; background: radial-gradient(circle at 40% 20%, #a8e8a8, #3ec054 60%); color: #fff; font: bold 12px/43px var(--sans); padding-left: 3px; }
```
